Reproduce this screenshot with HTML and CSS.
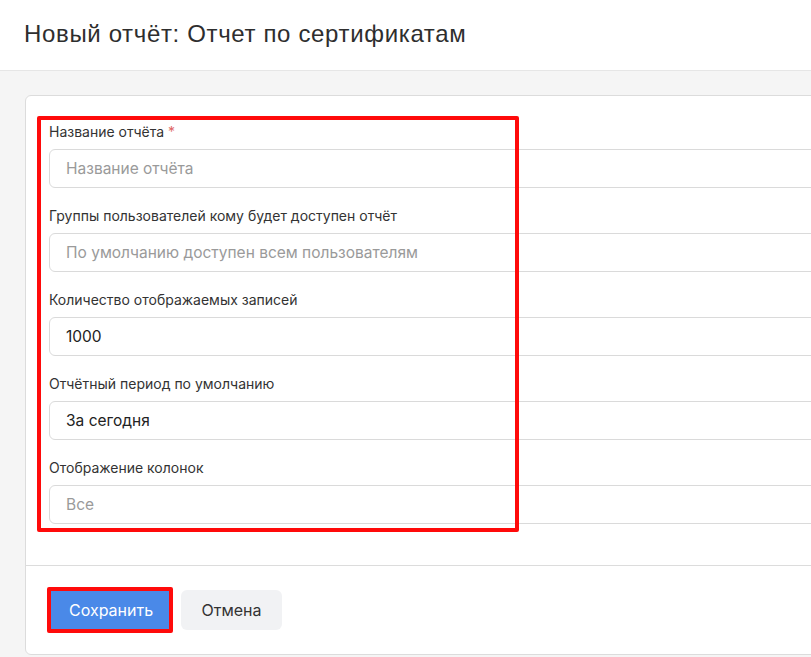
FILE: index.html
```html
<!DOCTYPE html>
<html lang="ru">
<head>
<meta charset="utf-8">
<title>Новый отчёт</title>
<link rel="stylesheet" href="styles.css">
</head>
<body>
<header class="page-header">
  <h1 class="page-title">Новый отчёт: Отчет по сертификатам</h1>
</header>
<main class="page-main">
  <section class="card">
    <div class="card-body">
      <div class="highlight highlight-form"></div>
      <div class="field">
        <label class="field-label">Название отчёта <span class="required">*</span></label>
        <input class="field-input" type="text" placeholder="Название отчёта">
      </div>
      <div class="field">
        <label class="field-label">Группы пользователей кому будет доступен отчёт</label>
        <input class="field-input" type="text" placeholder="По умолчанию доступен всем пользователям">
      </div>
      <div class="field">
        <label class="field-label">Количество отображаемых записей</label>
        <input class="field-input" type="text" value="1000">
      </div>
      <div class="field">
        <label class="field-label">Отчётный период по умолчанию</label>
        <input class="field-input" type="text" value="За сегодня">
      </div>
      <div class="field">
        <label class="field-label">Отображение колонок</label>
        <input class="field-input" type="text" placeholder="Все">
      </div>
    </div>
    <div class="card-footer">
      <div class="btn-wrap">
        <button class="btn btn-primary" type="button">Сохранить</button>
        <div class="highlight highlight-btn"></div>
      </div>
      <button class="btn btn-secondary" type="button">Отмена</button>
    </div>
  </section>
</main>
</body>
</html>
```
FILE: styles.css
```css
* { box-sizing: border-box; }
html, body { margin: 0; padding: 0; }
body {
  background: #f5f5f5;
  font-family: Inter, "Noto Sans", sans-serif;
  color: #333;
  overflow: hidden;
  width: 811px;
  height: 657px;
}
.page-header {
  height: 71px;
  background: #fff;
  border-bottom: 1px solid #e6e6e6;
  display: flex;
  align-items: center;
  padding-left: 24px;
}
.page-title {
  margin: 0;
  font-family: "Liberation Sans", Arial, sans-serif;
  font-weight: 400;
  font-size: 24px;
  letter-spacing: 0.65px;
  color: #2e2e2e;
  position: relative;
  top: -1px;
}
.page-main {
  padding: 24px 0 0 25px;
}
.card {
  width: 900px;
  background: #fff;
  border: 1px solid #dcdcdc;
  border-radius: 6px;
  position: relative;
}
.card-body {
  position: relative;
  padding: 26px 24px 41px 23px;
  display: flex;
  flex-direction: column;
  gap: 18px;
}
.field {
  display: flex;
  flex-direction: column;
}
.field-label {
  font-size: 14px;
  line-height: 20px;
  color: #333;
  margin-bottom: 7px;
}
.required { color: #e06666; }
.field-input {
  height: 39px;
  border: 1px solid #dadada;
  border-radius: 6px;
  padding: 0 16px 1px;
  font-family: Inter, "Noto Sans", sans-serif;
  font-size: 15.5px;
  color: #222;
  background: #fff;
  outline: none;
}
.field-input::placeholder { color: #9a9a9a; }
.card-footer {
  border-top: 1px solid #dcdcdc;
  padding: 24px 23px;
  display: flex;
  gap: 10px;
}
.btn-wrap { position: relative; display: flex; }
.btn {
  height: 40px;
  border: none;
  border-radius: 6px;
  font-family: Inter, "Noto Sans", sans-serif;
  font-size: 16px;
  padding: 0 20px;
  cursor: pointer;
}
.btn-primary {
  width: 122px;
  background: #4a89e8;
  color: #fff;
  border-radius: 3px;
}
.btn-secondary {
  width: 101px;
  background: #f1f2f4;
  color: #333;
}
.highlight {
  position: absolute;
  border: 4px solid #ff0a0a;
  pointer-events: none;
}
.highlight-form {
  left: 11px;
  top: 20px;
  width: 482px;
  height: 416px;
  border-radius: 2px;
}
.highlight-btn {
  left: -2px;
  top: -3px;
  right: -2px;
  bottom: -3px;
  border-radius: 2px;
}
```
